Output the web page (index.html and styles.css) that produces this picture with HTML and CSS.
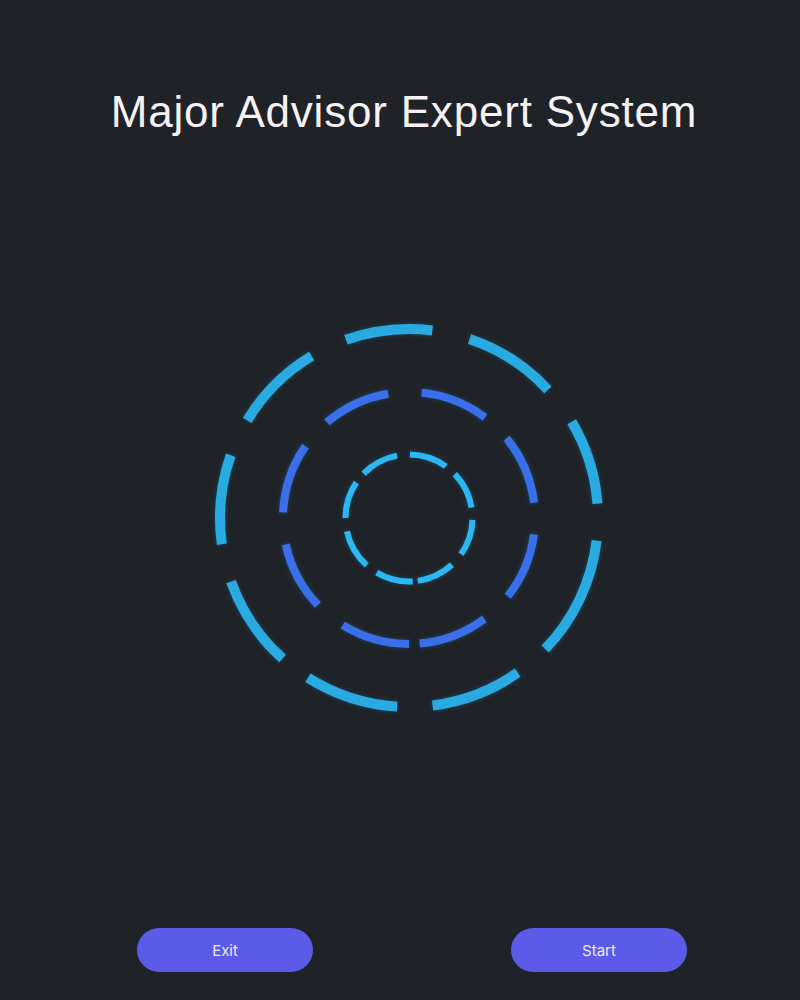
FILE: index.html
```html
<!DOCTYPE html>
<html lang="en">
<head>
<meta charset="utf-8">
<title>Major Advisor Expert System</title>
<link rel="stylesheet" href="styles.css">
</head>
<body>
<main class="app">
  <h1 class="title">Major Advisor Expert System</h1>
  <div class="loader">
    <svg class="rings" width="420" height="420" viewBox="0 0 420 420">
      <circle class="ring ring-outer" cx="210" cy="210" r="189" pathLength="360"/>
      <circle class="ring ring-middle" cx="210" cy="210" r="126" pathLength="360"/>
      <circle class="ring ring-inner" cx="210" cy="210" r="63.5" pathLength="360"/>
    </svg>
  </div>
  <div class="actions">
    <button class="btn" type="button">Exit</button>
    <button class="btn" type="button">Start</button>
  </div>
</main>
</body>
</html>
```
FILE: styles.css
```css
html, body {
  margin: 0;
  padding: 0;
  background: #1f2328;
}
.app {
  width: 800px;
  height: 1000px;
  display: flex;
  flex-direction: column;
  align-items: center;
  box-sizing: border-box;
  padding-top: 82px;
}
.title {
  margin: 0;
  font-family: "Liberation Sans", Arial, sans-serif;
  font-weight: 400;
  font-size: 44px;
  line-height: 60px;
  color: #f6f2f6;
  letter-spacing: 0.8px;
  transform: translateX(4px);
}
.loader {
  margin-top: 166px;
  width: 420px;
  height: 420px;
  transform: translateX(9px);
}
.rings {
  display: block;
  filter: drop-shadow(0 0 2px rgba(40, 160, 230, 0.3));
}
.ring {
  fill: none;
}
.ring-outer {
  stroke: #29abe2;
  stroke-width: 10;
  stroke-dasharray: 37 11 27.9 10.8 28.7 9.7 28.3 11.7 27.4 11.7 27.9 11.5 26.6 11.6 28.6 12.1 26.2 11.3;
  stroke-dashoffset: -6.9;
}
.ring-middle {
  stroke: #3a6eea;
  stroke-width: 8;
  stroke-dasharray: 30.9 14.9 31.8 4.9 31.7 14.6 31.6 14.7 32.2 14.6 31.1 15.3 31.3 13.7 32.2 14.5;
  stroke-dashoffset: -7.5;
}
.ring-inner {
  stroke: #2cb6f2;
  stroke-width: 6;
  stroke-dasharray: 33.1 12.6 34.5 4.5 34.1 11.2 35.9 12.3 34 10.4 34.8 11.7 34.7 10.6 34.2 11.4;
  stroke-dashoffset: -1.8;
}
.actions {
  margin-top: auto;
  margin-bottom: 28px;
  width: 550px;
  display: flex;
  justify-content: space-between;
  transform: translateX(12px);
}
.btn {
  width: 176px;
  height: 44px;
  border: none;
  border-radius: 22px;
  background: #5b5be8;
  color: #ecebf8;
  font-family: Inter, "Liberation Sans", Arial, sans-serif;
  font-size: 15px;
  font-weight: 400;
  cursor: pointer;
  padding: 0;
}
```
